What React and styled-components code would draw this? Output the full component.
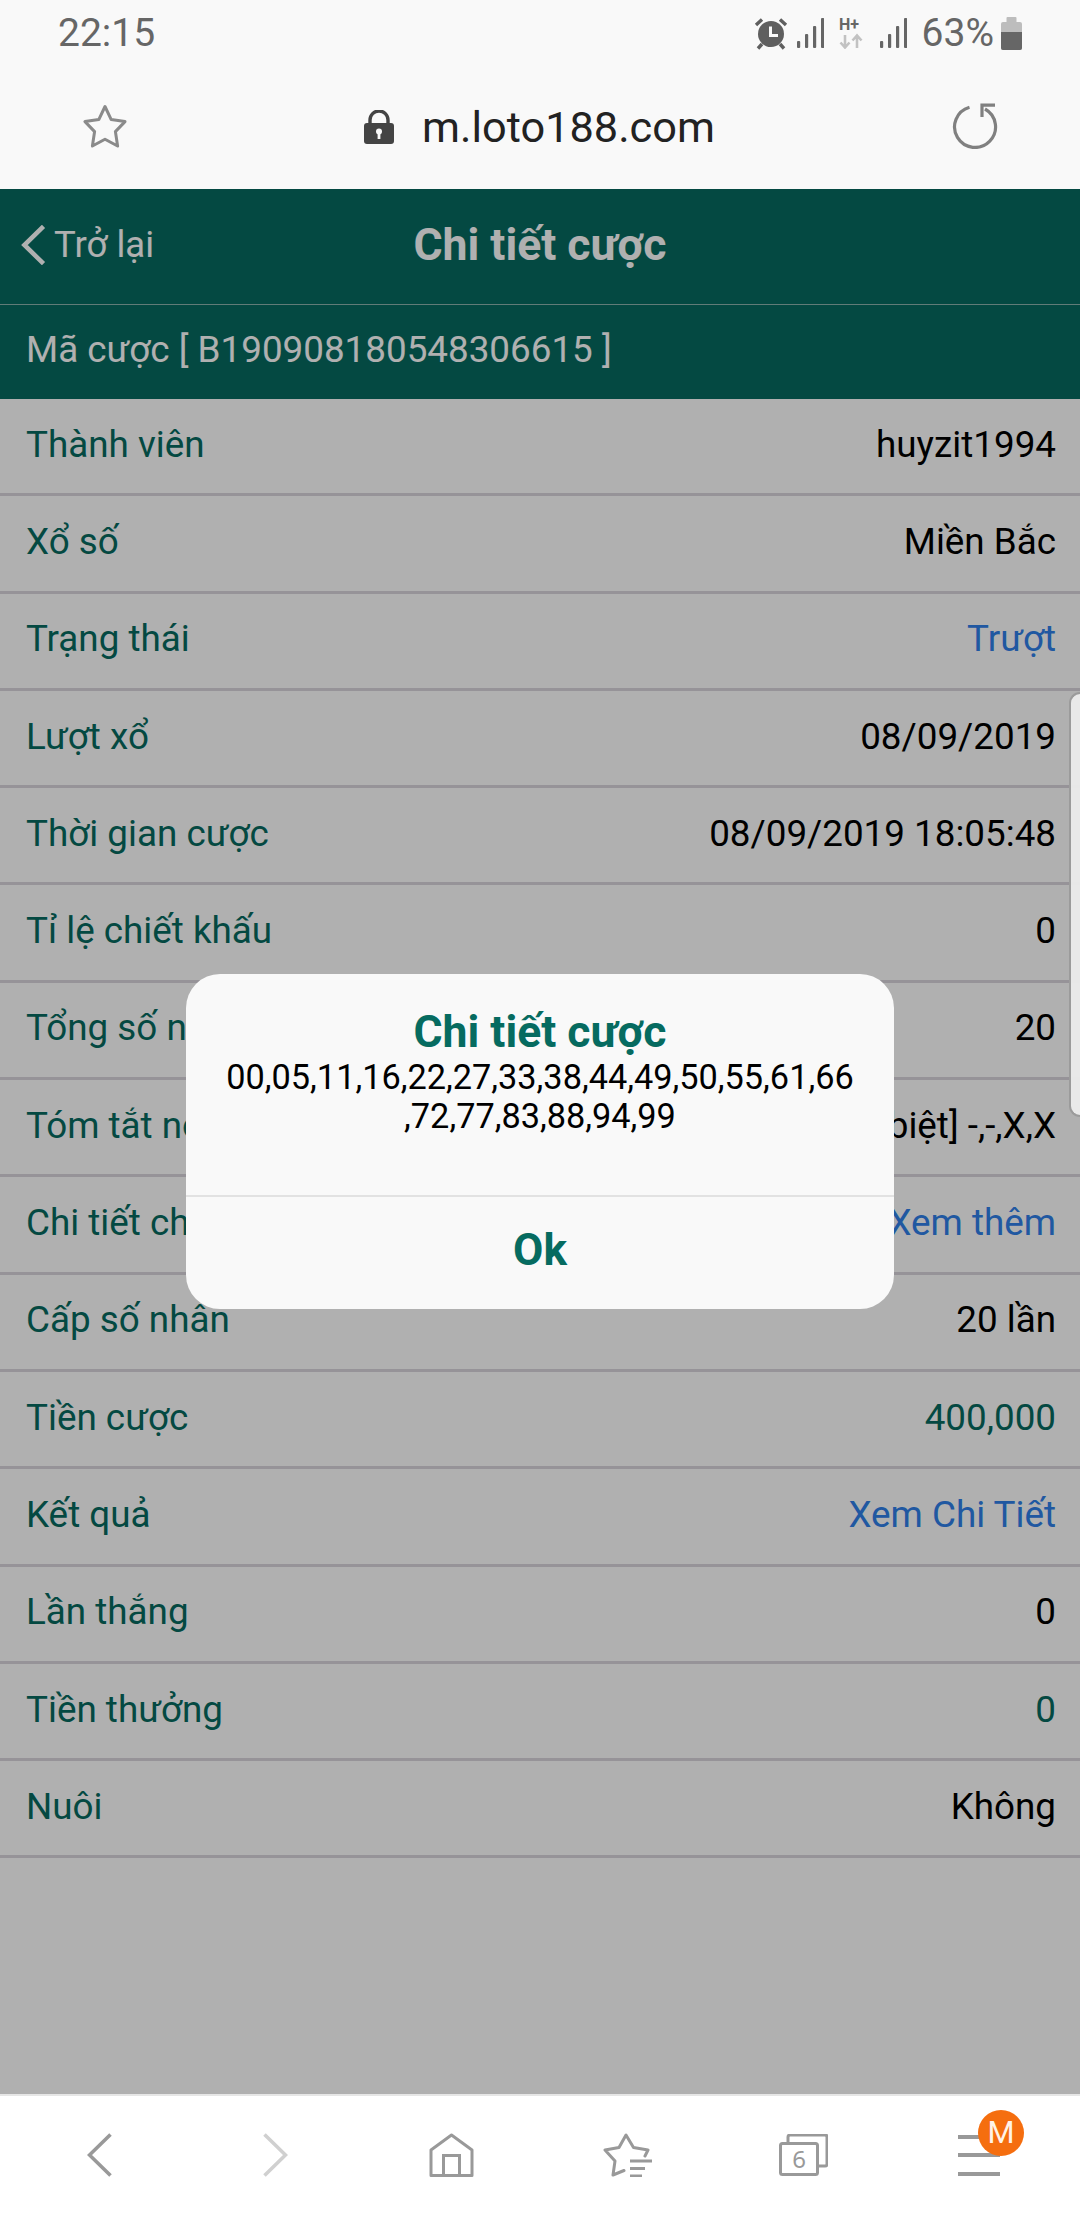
import React from "react";
import styled, { createGlobalStyle } from "styled-components";

const Global = createGlobalStyle`
  html, body { margin: 0; padding: 0; background: #fff; }
  body { font-family: Roboto, "Noto Sans", sans-serif; }
  * { box-sizing: border-box; }
`;

const Phone = styled.div`
  width: 1080px;
  height: 2220px;
  display: flex;
  flex-direction: column;
  overflow: hidden;
  position: relative;
`;

const StatusBar = styled.div`
  height: 65px;
  flex: none;
  background: #f9f9f9;
  display: flex;
  align-items: center;
  justify-content: space-between;
  padding: 1px 58px 0 58px;
`;
const Clock = styled.span`
  font-size: 39px;
  color: #666;
  line-height: 1;
`;
const StatusIcons = styled.div`
  display: flex;
  align-items: center;
  gap: 9px;
`;
const HSlot = styled.div`
  display: flex;
  margin: 0 8px 0 6px;
`;
const Percent = styled.span`
  font-size: 39px;
  color: #666;
  line-height: 1;
  margin: 0 -2px 0 6px;
`;

const AddressBar = styled.div`
  height: 124px;
  flex: none;
  background: #f9f9f9;
  display: flex;
  align-items: center;
  justify-content: space-between;
  padding: 0 82px 2px 83px;
`;
const Url = styled.div`
  display: flex;
  align-items: center;
  gap: 28px;
  font-size: 43.3px;
  color: #222;
  padding-top: 2px;
`;

const Web = styled.div`
  position: relative;
  flex: 1;
  background: #fff;
  display: flex;
  flex-direction: column;
`;
const Header = styled.div`
  height: 116px;
  flex: none;
  background: #066b60;
  border-bottom: 1px solid #8fb4af;
  display: grid;
  grid-template-columns: 1fr auto 1fr;
  align-items: center;
  color: #fff;
  padding-bottom: 4px;
`;
const Back = styled.div`
  display: flex;
  align-items: center;
  gap: 8px;
  padding-left: 21px;
  font-size: 36.5px;
`;
const HeaderTitle = styled.div`
  font-size: 44.5px;
  font-weight: 700;
`;
const CodeBar = styled.div`
  height: 94px;
  flex: none;
  background: #066b60;
  color: #fff;
  display: flex;
  align-items: center;
  padding: 0 0 5px 26px;
  font-size: 36.8px;
`;
const Row = styled.div`
  height: 97.3px;
  flex: none;
  border-bottom: 3px solid #d9d6dc;
  display: flex;
  align-items: center;
  justify-content: space-between;
  padding: 0 24px 4px 26px;
  font-size: 36.8px;
  white-space: nowrap;
`;
const Label = styled.span`
  color: #066b60;
`;
const Value = styled.span`
  color: ${(p) => (p.$tone === "link" ? "#2f80ea" : p.$tone === "money" ? "#066b60" : "#000")};
`;

const Backdrop = styled.div`
  position: absolute;
  inset: 0;
  background: rgba(0, 0, 0, 0.31);
  display: flex;
  align-items: center;
  justify-content: center;
`;
const Dialog = styled.div`
  width: 708px;
  height: 335px;
  background: #f9f9f9;
  border-radius: 34px;
  display: flex;
  flex-direction: column;
  overflow: hidden;
`;
const DialogBody = styled.div`
  height: 223px;
  flex: none;
  padding: 33px 38px 0;
  text-align: center;
  border-bottom: 2px solid #e2e2e2;
`;
const DialogTitle = styled.div`
  font-size: 44.5px;
  font-weight: 700;
  line-height: 50px;
  color: #066b60;
`;
const DialogText = styled.div`
  font-size: 34.3px;
  line-height: 39px;
  color: #000;
  line-break: anywhere;
  margin-top: 1px;
`;
const OkButton = styled.div`
  flex: 1;
  display: flex;
  align-items: center;
  justify-content: center;
  font-size: 44px;
  font-weight: 700;
  color: #066b60;
  padding-bottom: 6px;
`;
const ScrollHandle = styled.div`
  position: absolute;
  right: 0;
  top: 503px;
  width: 11px;
  height: 425px;
  background: rgba(236, 236, 236, 0.95);
  border-left: 2px solid #9b9b9b;
  border-top: 2px solid #9b9b9b;
  border-bottom: 2px solid #9b9b9b;
  border-radius: 14px 0 0 14px;
`;

const BottomBar = styled.div`
  height: 126px;
  flex: none;
  background: #fff;
  border-top: 2px solid #e6e6e6;
  display: grid;
  grid-template-columns: repeat(6, 1fr);
  padding: 0 13px 6px 11px;
  align-items: center;
`;
const NavItem = styled.div`
  display: flex;
  justify-content: center;
  align-items: center;
  position: relative;
`;
const Badge = styled.div`
  position: absolute;
  left: 87px;
  top: -25px;
  width: 46px;
  height: 46px;
  border-radius: 50%;
  background: #f56e0f;
  color: #fff3e8;
  font-size: 31px;
  display: flex;
  align-items: center;
  justify-content: center;
`;

const Alarm = () => (
  <svg width="34" height="33" viewBox="0 0 34 33" fill="none">
    <circle cx="17" cy="17" r="13" fill="#5f5f5f" />
    <path d="M2 8 L8 2.5 M26 2.5 L32 8 M8 27 L4 31.5 M26 27 L30 31.5" stroke="#5f5f5f" strokeWidth="3.4" />
    <path d="M16.5 9.5 V18.5 H24" stroke="#f9f9f9" strokeWidth="3" />
  </svg>
);
const Signal = () => (
  <svg width="27" height="30" viewBox="0 0 27 30" fill="#666">
    <rect x="0" y="23" width="3.2" height="7" rx="1" />
    <rect x="8" y="16" width="3.2" height="14" rx="1" />
    <rect x="16" y="8" width="3.2" height="22" rx="1" />
    <rect x="24" y="0" width="3.2" height="30" rx="1" />
  </svg>
);
const HPlus = () => (
  <svg width="24" height="32" viewBox="0 0 24 32" fill="none">
    <text x="0" y="13" fontFamily="Roboto, sans-serif" fontWeight="700" fontSize="16" fill="#666">H+</text>
    <path d="M6 18 V30 M1.5 25.5 L6 30.5 L10.5 25.5 M18 31 V19 M13.5 23.5 L18 18.5 L22.5 23.5" stroke="#c2c2c2" strokeWidth="2.6" />
  </svg>
);
const Battery = () => (
  <svg width="21" height="33" viewBox="0 0 21 33">
    <rect x="5.5" y="0" width="10" height="7" rx="1" fill="#bdbdbd" />
    <rect x="0" y="5" width="21" height="28" rx="2" fill="#bdbdbd" />
    <path d="M0 15 H21 V31 a2 2 0 0 1 -2 2 H2 a2 2 0 0 1 -2 -2 Z" fill="#666" />
  </svg>
);
const StarIcon = () => (
  <svg width="44" height="45" viewBox="0 0 44 45" fill="none">
    <path d="M22 2.5 L28.2 15.6 L42 17.6 L32.4 27.6 L34.6 42 L22 35.2 L9.4 42 L11.6 27.6 L2 17.6 L15.8 15.6 Z" stroke="#8a8a8a" strokeWidth="3" strokeLinejoin="round" />
  </svg>
);
const LockIcon = () => (
  <svg width="30" height="34" viewBox="0 0 30 34">
    <path d="M6 15 V10 a9 9 0 0 1 18 0 V15" fill="none" stroke="#444" strokeWidth="3.4" />
    <rect x="0" y="13" width="30" height="21" rx="3" fill="#444" />
    <circle cx="15" cy="21.5" r="3" fill="#f9f9f9" />
    <rect x="13.6" y="22" width="2.8" height="7" fill="#f9f9f9" />
  </svg>
);
const RefreshIcon = () => (
  <svg width="46" height="46" viewBox="0 0 46 46" fill="none" stroke="#808080" strokeWidth="3.2">
    <path d="M17.5 4.2 A20.5 20.5 0 1 0 33 6" />
    <path d="M43 2.2 H30 V14" />
  </svg>
);
const Chevron = ({ dir, color, width, height, stroke }) => (
  <svg width={width} height={height} viewBox="0 0 25 44" fill="none" stroke={color} strokeWidth={stroke}>
    <path d={dir === "left" ? "M23.5 1.5 L2.5 22 L23.5 42.5" : "M1.5 1.5 L22.5 22 L1.5 42.5"} />
  </svg>
);
const HomeIcon = () => (
  <svg width="45" height="44" viewBox="0 0 45 44" fill="none" stroke="#999" strokeWidth="3">
    <path d="M22.5 2 L43 17 V42.5 H2 V17 Z" strokeLinejoin="round" />
    <path d="M14.5 42.5 V22.5 H30.5 V42.5" />
  </svg>
);
const StarListIcon = () => (
  <svg width="49" height="44" viewBox="0 0 49 44" fill="none" stroke="#999">
    <path d="M42 23 L45 17 L30.5 14.5 L23 2 L16 14.5 L2 17 L12 28 L10 42 L21 37.5" strokeWidth="3" strokeLinejoin="round" strokeLinecap="round" />
    <path d="M27 28 H49 M27 35.5 H42 M27 43 H39" strokeWidth="3" />
  </svg>
);
const TabsIcon = () => (
  <svg width="49" height="42" viewBox="0 0 49 42" fill="none" stroke="#999" strokeWidth="3">
    <path d="M9 8 V3 a2 2 0 0 1 2 -2 H46 a2 2 0 0 1 2 2 V30 a2 2 0 0 1 -2 2 H40" />
    <rect x="1.5" y="9.5" width="37" height="31" rx="2" />
    <text x="20" y="34" textAnchor="middle" fontFamily="'Noto Sans', sans-serif" fontSize="24" fill="#999" stroke="none">6</text>
  </svg>
);
const MenuIcon = () => (
  <svg width="42" height="41" viewBox="0 0 42 41" fill="#999">
    <rect x="0" y="0" width="42" height="4" />
    <rect x="0" y="18" width="42" height="4" />
    <rect x="0" y="37" width="42" height="4" />
  </svg>
);

const rows = [
  ["Thành viên", "huyzit1994"],
  ["Xổ số", "Miền Bắc"],
  ["Trạng thái", "Trượt", "link"],
  ["Lượt xổ", "08/09/2019"],
  ["Thời gian cược", "08/09/2019 18:05:48"],
  ["Tỉ lệ chiết khấu", "0"],
  ["Tổng số nhóm", "20"],
  ["Tóm tắt nội dung", "[Đề đặc biệt] -,-,X,X"],
  ["Chi tiết chọn số", "Xem thêm", "link"],
  ["Cấp số nhân", "20 lần"],
  ["Tiền cược", "400,000", "money"],
  ["Kết quả", "Xem Chi Tiết", "link"],
  ["Lần thắng", "0"],
  ["Tiền thưởng", "0", "money"],
  ["Nuôi", "Không"],
];

export default function App() {
  return (
    <Phone>
      <Global />
      <StatusBar>
        <Clock>22:15</Clock>
        <StatusIcons>
          <Alarm />
          <Signal />
          <HSlot><HPlus /></HSlot>
          <Signal />
          <Percent>63%</Percent>
          <Battery />
        </StatusIcons>
      </StatusBar>
      <AddressBar>
        <StarIcon />
        <Url>
          <LockIcon />
          m.loto188.com
        </Url>
        <RefreshIcon />
      </AddressBar>
      <Web>
        <Header>
          <Back>
            <Chevron dir="left" color="#fff" width={25} height={40} stroke={5} />
            Trở lại
          </Back>
          <HeaderTitle>Chi tiết cược</HeaderTitle>
        </Header>
        <CodeBar>Mã cược [ B190908180548306615 ]</CodeBar>
        {rows.map(([label, value, tone]) => (
          <Row key={label}>
            <Label>{label}</Label>
            <Value $tone={tone}>{value}</Value>
          </Row>
        ))}
        <Backdrop>
          <Dialog>
            <DialogBody>
              <DialogTitle>Chi tiết cược</DialogTitle>
              <DialogText>00,05,11,16,22,27,33,38,44,49,50,55,61,66,72,77,83,88,94,99</DialogText>
            </DialogBody>
            <OkButton>Ok</OkButton>
          </Dialog>
        </Backdrop>
        <ScrollHandle />
      </Web>
      <BottomBar>
        <NavItem><Chevron dir="left" color="#999" width={25} height={44} stroke={3.6} /></NavItem>
        <NavItem><Chevron dir="right" color="#d0d0d0" width={25} height={44} stroke={3.6} /></NavItem>
        <NavItem><HomeIcon /></NavItem>
        <NavItem><StarListIcon /></NavItem>
        <NavItem><TabsIcon /></NavItem>
        <NavItem>
          <MenuIcon />
          <Badge>M</Badge>
        </NavItem>
      </BottomBar>
    </Phone>
  );
}
